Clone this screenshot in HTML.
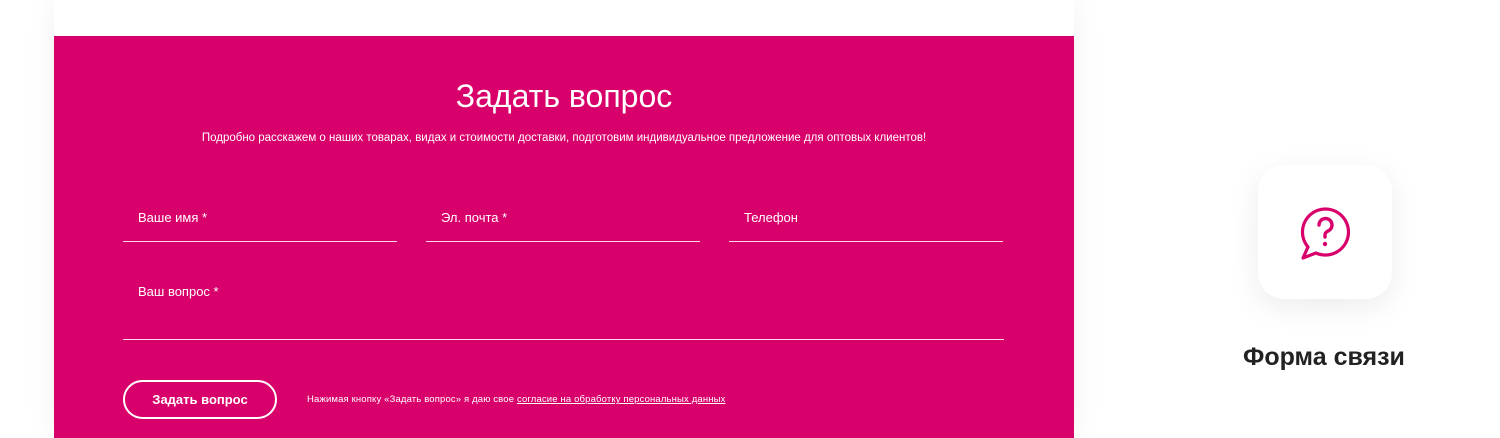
<!DOCTYPE html>
<html><head><meta charset="utf-8"><style>
body{margin:0;width:1500px;height:438px;background:#fff;overflow:hidden;position:relative;font-family:"Liberation Sans",sans-serif}
.wrap{position:absolute;left:54px;top:0;width:1020px;height:438px;background:#fff;box-shadow:0 0 30px rgba(0,0,0,0.06)}
.pink{position:absolute;left:54px;top:36px;width:1020px;height:402px;background:#d8006a;color:#fff}
h2{position:absolute;left:0;width:100%;top:42px;margin:0;text-align:center;font-weight:normal;font-size:32px}
.sub{position:absolute;left:0;width:100%;top:96px;text-align:center;font-size:11.5px}
.f{position:absolute;border-bottom:1px solid rgba(255,255,255,0.85);font-size:13px}
.f span{position:absolute;left:15px}
.btn{position:absolute;left:69px;top:344px;width:154px;height:39px;border:2px solid #fff;border-radius:20px;box-sizing:border-box;text-align:center;line-height:35px;font-weight:bold;font-size:13px}
.note{position:absolute;left:253px;top:358px;font-size:9.5px;letter-spacing:0.15px}
.note u{text-decoration:underline}
.card{position:absolute;left:1258px;top:165px;width:134px;height:134px;border-radius:26px;background:#fff;box-shadow:0 8px 30px rgba(0,0,0,0.08)}
.title{position:absolute;left:1243px;top:343px;font-weight:bold;font-size:25px;color:#222}
</style></head><body>
<div class="wrap"></div>
<div class="pink">
<h2>Задать вопрос</h2>
<div class="sub">Подробно расскажем о наших товарах, видах и стоимости доставки, подготовим индивидуальное предложение для оптовых клиентов!</div>
<div class="f" style="left:69px;top:160px;width:274px;height:45px"><span style="top:14px">Ваше имя *</span></div>
<div class="f" style="left:372px;top:160px;width:274px;height:45px"><span style="top:14px">Эл. почта *</span></div>
<div class="f" style="left:675px;top:160px;width:274px;height:45px"><span style="top:14px">Телефон</span></div>
<div class="f" style="left:69px;top:240px;width:881px;height:63px"><span style="top:8px">Ваш вопрос *</span></div>
<div class="btn">Задать вопрос</div>
<div class="note">Нажимая кнопку «Задать вопрос» я даю свое <u>согласие на обработку персональных данных</u></div>
</div>
<div class="card">
<svg width="134" height="134" viewBox="0 0 134 134"><path d="M50 82A23 23 0 1 1 58 88L45 93Z" fill="none" stroke="#d8006a" stroke-width="3.2" stroke-linejoin="round"/>
<path d="M61 60a6.5 6.5 0 1 1 9 6c-2 1-3 2-3 4v2" fill="none" stroke="#d8006a" stroke-width="3.4" stroke-linecap="round"/><circle cx="67" cy="79" r="2.2" fill="#d8006a"/></svg>
</div>
<div class="title">Форма связи</div>
</body></html>
